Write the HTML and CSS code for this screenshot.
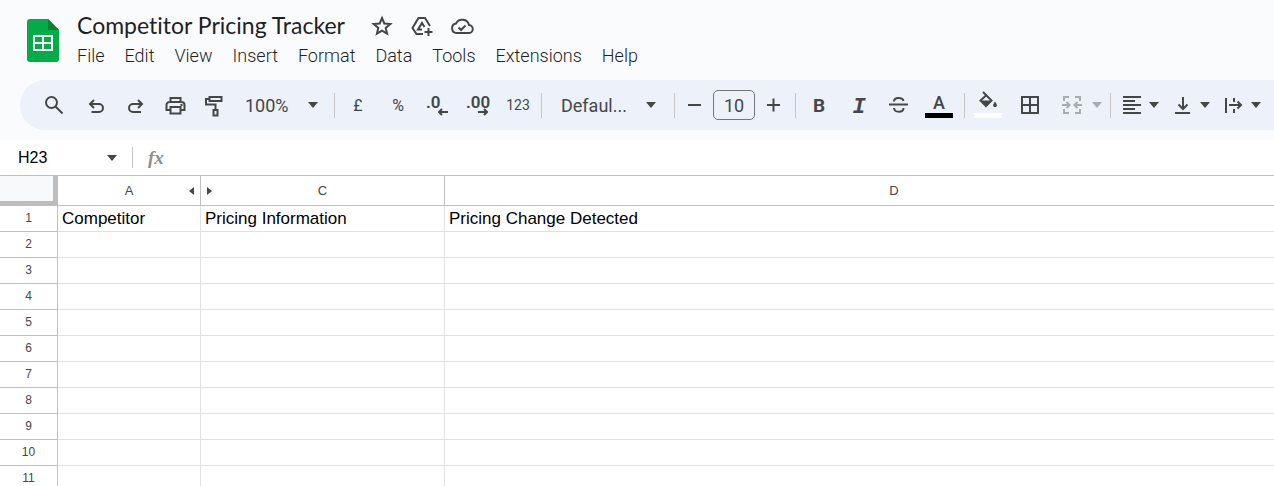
FILE: index.html
```html
<!DOCTYPE html>
<html lang="en">
<head>
  <meta charset="UTF-8" />
  <meta name="viewport" content="width=device-width, initial-scale=1.0"/>
  <title>Competitor Pricing Tracker</title>
  <link rel="stylesheet" href="styles.css">
</head>
<body>

  <header class="header">
    <a class="logo" href="#" aria-label="Sheets home">
      <svg width="32" height="44" viewBox="0 0 32 44">
        <path d="M3 0H21L32 11V40a3 3 0 0 1-3 3H3a3 3 0 0 1-3-3V3a3 3 0 0 1 3-3z" fill="#03ac46"/>
        <path d="M21 0L32 11H21z" fill="#068231"/>
        <path d="M6 16H26V32H6zM8 18V23H15V18zM17 18V23H24V18zM8 25V30H15V25zM17 25V30H24V25z" fill="#fff" fill-rule="evenodd"/>
      </svg>
    </a>
    <div class="heading">
      <div class="title-row">
        <h1>Competitor Pricing Tracker</h1>
        <button class="icon-btn" aria-label="Star">
          <svg class="icon" viewBox="0 0 24 24"><path d="M12 4l2.300 5.500 6 .5-4.600 3.900 1.400 5.800L12 16.600 6.900 19.700l1.400-5.800L3.700 10l6-.5z"/></svg>
        </button>
        <button class="icon-btn" aria-label="Add to Drive">
          <svg class="icon" viewBox="0 0 24 24"><path d="M13 20H6.500L2.500 14 8.500 4H15L20 12M12 15.500H8L12 9l2.500 4M18.500 14v8M14.500 18h8"/></svg>
        </button>
        <button class="icon-btn" aria-label="See document status">
          <svg class="icon" viewBox="0 0 24 24"><path d="M6.500 19h12a4 4 0 0 0 .5-8A7 7 0 0 0 6 9.500 4.800 4.800 0 0 0 6.500 19zM8.500 13.500l2.500 2.500 4.500-4.500"/></svg>
        </button>
      </div>
      <nav class="menu">
        <a href="#">File</a>
        <a href="#">Edit</a>
        <a href="#">View</a>
        <a href="#">Insert</a>
        <a href="#">Format</a>
        <a href="#">Data</a>
        <a href="#">Tools</a>
        <a href="#">Extensions</a>
        <a href="#">Help</a>
      </nav>
    </div>
  </header>

  <div class="toolbar">
    <div class="group">
      <button class="icon-btn" aria-label="Search the menus">
        <svg class="icon" viewBox="0 0 24 24"><circle cx="9.500" cy="9.500" r="5.500"/><path d="M13.500 13.500l7 7"/></svg>
      </button>
      <button class="icon-btn" aria-label="Undo">
        <svg class="icon" viewBox="0 0 24 24"><path d="M12 7L8 11l4 4M8.500 11H17a4 4 0 0 1 0 8H9.500"/></svg>
      </button>
      <button class="icon-btn" aria-label="Redo">
        <svg class="icon" viewBox="0 0 24 24"><path d="M16 7l4 4-4 4M20 11h-9a4 4 0 0 0 0 8h8"/></svg>
      </button>
      <button class="icon-btn" aria-label="Print">
        <svg class="icon" viewBox="0 0 24 24"><path d="M8.500 9V5h10v4M8.500 17H4.500V12a3 3 0 0 1 3-3h12a3 3 0 0 1 3 3v5h-4M8.500 14h10v6.500h-10zM18.500 12h2"/></svg>
      </button>
      <button class="icon-btn" aria-label="Paint format">
        <svg class="icon" viewBox="0 0 24 24"><path d="M7.500 4h12v4h-12zM7.500 6H4v5.500h9.500V17M11.500 17h4v5.500h-4z"/></svg>
      </button>
      <div class="select zoom">
        <select aria-label="Zoom"><option>100%</option></select>
        <svg class="caret" viewBox="0 0 10 6"><path d="M0 0h10L5 6z"/></svg>
      </div>
    </div>
    <div class="group">
      <button class="icon-btn" aria-label="Format as currency">£</button>
      <button class="icon-btn" aria-label="Format as percent">%</button>
      <button class="icon-btn decimals" aria-label="Decrease decimal places">
        <span>.0</span>
        <svg class="arrow" viewBox="0 0 10 8"><path d="M10 4H1M4 1L1 4l3 3"/></svg>
      </button>
      <button class="icon-btn decimals" aria-label="Increase decimal places">
        <span>.00</span>
        <svg class="arrow" viewBox="0 0 10 8"><path d="M0 4h9M6 1l3 3-3 3"/></svg>
      </button>
      <button class="icon-btn numbers" aria-label="More formats">123</button>
    </div>
    <div class="group">
      <div class="select font">
        <select aria-label="Font"><option>Defaul...</option></select>
        <svg class="caret" viewBox="0 0 10 6"><path d="M0 0h10L5 6z"/></svg>
      </div>
    </div>
    <div class="group font-size">
      <button class="step" aria-label="Decrease font size">
        <svg class="icon" viewBox="0 0 24 24"><path d="M6 12h13"/></svg>
      </button>
      <input type="text" value="10" aria-label="Font size">
      <button class="step" aria-label="Increase font size">
        <svg class="icon" viewBox="0 0 24 24"><path d="M5 12h13M11.500 5.500v13"/></svg>
      </button>
    </div>
    <div class="group text-style">
      <button class="icon-btn bold" aria-label="Bold">B</button>
      <button class="icon-btn italic" aria-label="Italic">I</button>
      <button class="icon-btn" aria-label="Strikethrough">
        <svg class="icon" viewBox="0 0 24 24"><path d="M2 11.500h19M7 8.500C7 4 15.500 4 16.500 8M7 15c.5 5 9.500 5 9.500 0"/></svg>
      </button>
      <button class="icon-btn color" aria-label="Text color">
        <span>A</span>
        <i class="swatch black"></i>
      </button>
    </div>
    <div class="group fills">
      <button class="icon-btn color" aria-label="Fill color">
        <svg class="icon" viewBox="0 0 24 24"><path d="M7 2l8.500 8.500L10 16l-5.500-5.500L10.500 5"/><path class="solid" d="M4.500 10.500h11L10 16z M19 11.500c-3 4-2 5.500 0 5.500s3-1.500 0-5.500z"/></svg>
        <i class="swatch white"></i>
      </button>
      <button class="icon-btn" aria-label="Borders">
        <svg class="icon" viewBox="0 0 24 24"><path d="M4 4h16v16H4zM12 4v16M4 12h16"/></svg>
      </button>
      <button class="menu-btn merge" aria-label="Merge cells" disabled>
        <svg class="icon" viewBox="0 0 24 24"><path d="M9 4H4v4M4 16v4h5M15 4h5v4M20 16v4h-5M2 12h7M6.500 9l3 3-3 3M22 12h-7M17.500 9l-3 3 3 3"/></svg>
        <svg class="caret" viewBox="0 0 10 6"><path d="M0 0h10L5 6z"/></svg>
      </button>
    </div>
    <div class="group">
      <button class="menu-btn" aria-label="Horizontal align">
        <svg class="icon" viewBox="0 0 24 24"><path d="M3 4h18M3 8h12M3 12h18M3 16h12M3 20h18"/></svg>
        <svg class="caret" viewBox="0 0 10 6"><path d="M0 0h10L5 6z"/></svg>
      </button>
      <button class="menu-btn" aria-label="Vertical align">
        <svg class="icon" viewBox="0 0 24 24"><path d="M12 4v12M7.500 11.500L12 16l4.500-4.500M4 20h15"/></svg>
        <svg class="caret" viewBox="0 0 10 6"><path d="M0 0h10L5 6z"/></svg>
      </button>
      <button class="menu-btn" aria-label="Text wrapping">
        <svg class="icon" viewBox="0 0 24 24"><path d="M4 5v15M12 5v4M12 16v4M7 12h12M15.500 8.500L19 12l-3.500 3.500"/></svg>
        <svg class="caret" viewBox="0 0 10 6"><path d="M0 0h10L5 6z"/></svg>
      </button>
    </div>
  </div>

  <div class="formula-bar">
    <div class="name-box">
      <input type="text" value="H23" aria-label="Name box">
      <svg class="caret" viewBox="0 0 10 6"><path d="M0 0h10L5 6z"/></svg>
    </div>
    <label class="fx" for="formula">fx</label>
    <input type="text" class="formula" id="formula">
  </div>

  <main class="sheet">
    <table>
      <colgroup>
        <col class="col-num"><col class="col-a"><col class="col-c"><col class="col-d">
      </colgroup>
      <thead>
        <tr>
          <th class="corner"></th>
          <th>A<svg class="hidden-left" viewBox="0 0 5 8"><path d="M5 0v8L0 4z"/></svg></th>
          <th><svg class="hidden-right" viewBox="0 0 5 8"><path d="M0 0v8l5-4z"/></svg>C</th>
          <th>D</th>
        </tr>
      </thead>
      <tbody>
        <tr><th>1</th><td>Competitor</td><td>Pricing Information</td><td>Pricing Change Detected</td></tr>
        <tr><th>2</th><td></td><td></td><td></td></tr>
        <tr><th>3</th><td></td><td></td><td></td></tr>
        <tr><th>4</th><td></td><td></td><td></td></tr>
        <tr><th>5</th><td></td><td></td><td></td></tr>
        <tr><th>6</th><td></td><td></td><td></td></tr>
        <tr><th>7</th><td></td><td></td><td></td></tr>
        <tr><th>8</th><td></td><td></td><td></td></tr>
        <tr><th>9</th><td></td><td></td><td></td></tr>
        <tr><th>10</th><td></td><td></td><td></td></tr>
        <tr><th>11</th><td></td><td></td><td></td></tr>
      </tbody>
    </table>
  </main>

</body>
</html>
```

FILE: styles.css
```css
* {
  box-sizing: border-box;
}

body {
  margin: 0;
  height: 100vh;
  display: flex;
  flex-direction: column;
  overflow: hidden;
  background: #f9fbfd;
  color: #1f1f1f;
  font-family: Roboto, "Liberation Sans", sans-serif;
}

button {
  padding: 0;
  border: none;
  background: none;
  color: #444746;
  font-family: inherit;
  font-size: 16px;
  cursor: pointer;
}

input,
select {
  border: none;
  background: none;
  color: inherit;
  font-family: inherit;
  outline: none;
}

.icon {
  width: 24px;
  height: 24px;
  flex: none;
  display: block;
  fill: none;
  stroke: #444746;
  stroke-width: 2;
}

.icon .solid {
  fill: #444746;
  stroke: none;
}

.caret {
  width: 10px;
  height: 6px;
  flex: none;
  fill: #444746;
}

/* header */

.header {
  flex: none;
  display: flex;
  height: 80px;
  padding: 12px 0 0 27px;
}

.logo {
  margin-top: 7px;
}

.heading {
  margin-left: 18px;
}

.title-row {
  display: flex;
  align-items: center;
  height: 28px;
}

h1 {
  margin: 0 17px 2px 0;
  font-family: Lato, sans-serif;
  font-size: 23px;
  font-weight: 400;
  font-variant-ligatures: none;
  line-height: 26px;
}

.menu {
  display: flex;
  gap: 20px;
  padding-top: 4px;
}

.menu a {
  color: #1f1f1f;
  font-size: 18px;
  font-weight: 300;
  line-height: 24px;
  text-decoration: none;
}

/* toolbar */

.toolbar {
  flex: none;
  display: flex;
  align-items: center;
  height: 50px;
  margin-left: 20px;
  padding-left: 14px;
  background: #ecf1fa;
  border-radius: 25px 0 0 25px;
  overflow: hidden;
}

.group {
  flex: none;
  display: flex;
  align-items: center;
}

.group + .group::before {
  content: "";
  width: 1px;
  height: 25px;
  margin: 0 3px;
  background: #c7c7c7;
}

.icon-btn {
  position: relative;
  flex: none;
  display: flex;
  align-items: center;
  justify-content: center;
  width: 40px;
  height: 30px;
}

.select {
  position: relative;
  color: #444746;
}

.select select {
  appearance: none;
  width: 100%;
  height: 30px;
  padding: 0;
  font-size: 18px;
}

.select .caret {
  position: absolute;
  right: 15px;
  top: 12px;
}

.zoom {
  width: 97px;
  padding-left: 11px;
}

.zoom .caret {
  right: 13px;
}

.font {
  width: 126px;
  padding-left: 16px;
}

.decimals {
  align-items: flex-start;
  justify-content: flex-start;
  padding-left: 8px;
  font-size: 17px;
  font-weight: 600;
  line-height: 24px;
}

.decimals .arrow {
  position: absolute;
  right: 10px;
  bottom: 4px;
  width: 10px;
  height: 8px;
  fill: none;
  stroke: #444746;
  stroke-width: 2;
}

.numbers {
  font-size: 14px;
}

.font-size {
  padding-right: 2px;
}

.font-size input {
  width: 42px;
  height: 30px;
  margin: 0 3px;
  padding: 0;
  border: 1px solid #747775;
  border-radius: 5px;
  color: #444746;
  font-size: 18px;
  text-align: center;
}

.step {
  display: flex;
  justify-content: center;
  width: 32px;
}

.text-style {
  padding-right: 2px;
}

.bold {
  font-size: 19px;
  font-weight: 700;
}

.italic {
  padding-top: 4px;
  font-family: "Liberation Mono", monospace;
  font-size: 22px;
  font-style: italic;
  font-weight: 700;
}

.color {
  padding-bottom: 6px;
  font-size: 18px;
  font-weight: 500;
}

.swatch {
  position: absolute;
  left: 6px;
  bottom: 2px;
  width: 28px;
  height: 5px;
}

.black {
  background: #000;
}

.white {
  background: #fff;
}

.fills button + button {
  margin-left: 2px;
}

.menu-btn {
  flex: none;
  display: flex;
  align-items: center;
  gap: 5px;
  padding: 0 6px;
}

.merge {
  gap: 8px;
  padding: 0 5px 0 8px;
  opacity: 0.4;
}

/* formula bar */

.formula-bar {
  flex: none;
  display: flex;
  align-items: center;
  height: 35px;
  margin-top: 10px;
  background: #fff;
}

.name-box {
  display: flex;
  align-items: center;
  width: 133px;
  height: 21px;
  padding-left: 18px;
  border-right: 1px solid #c7c7c7;
}

.name-box input {
  width: 89px;
  padding: 0;
  color: #000;
  font-family: "Liberation Sans", sans-serif;
  font-size: 16px;
}

.fx {
  width: 32px;
  padding-left: 15px;
  color: #8f8f8f;
  font-family: "Liberation Serif", serif;
  font-size: 19px;
  font-style: italic;
  font-weight: 700;
}

.formula {
  flex: 1;
}

/* sheet */

.sheet {
  flex: 1;
  min-height: 0;
  overflow: hidden;
  background: #fff;
  border-top: 1px solid #c0c0c0;
}

table {
  width: 1344px;
  border-collapse: separate;
  border-spacing: 0;
  table-layout: fixed;
  font-family: "Liberation Sans", sans-serif;
}

.col-num {
  width: 58px;
}

.col-a {
  width: 143px;
}

.col-c {
  width: 244px;
}

th {
  position: relative;
  padding: 0;
  border-right: 1px solid #c0c0c0;
  border-bottom: 1px solid #c0c0c0;
  color: #444746;
  font-size: 12px;
  font-weight: 400;
}

thead th {
  height: 30px;
  font-size: 13px;
}

.corner {
  background: #f8f9fa;
  border-right: 5px solid #bdbdbd;
  border-bottom: 5px solid #bdbdbd;
}

.hidden-left,
.hidden-right {
  position: absolute;
  top: 11px;
  width: 5px;
  height: 8px;
  fill: #444746;
}

.hidden-left {
  right: 6px;
}

.hidden-right {
  left: 6px;
}

tbody th {
  padding-bottom: 2px;
}

td {
  height: 26px;
  padding: 1px 4px 0;
  border-right: 1px solid #e1e1e1;
  border-bottom: 1px solid #e1e1e1;
  color: #000;
  font-size: 17px;
  line-height: 24px;
  white-space: nowrap;
}
```
